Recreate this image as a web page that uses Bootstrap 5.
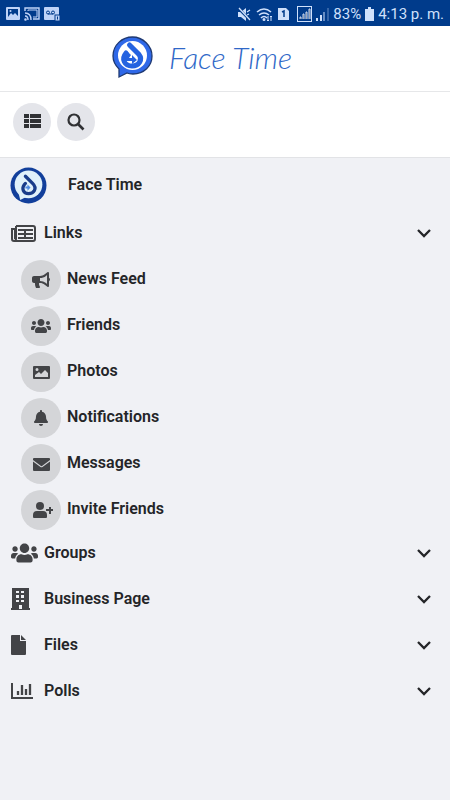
<!DOCTYPE html>
<html lang="en">
<head>
<meta charset="utf-8">
<meta name="viewport" content="width=device-width, initial-scale=1">
<title>Face Time</title>
<link href="https://cdn.jsdelivr.net/npm/bootstrap@5.3.0/dist/css/bootstrap.min.css" rel="stylesheet">
<style>
  body { font-family: Roboto, "Liberation Sans", sans-serif; font-size: 16px; line-height: 20px; background: #f0f1f5; color: #242528; min-height: 100vh; }
  svg { display: block; flex: none; }
  .status-bar { background: #003b8b; color: #cfe0fb; height: 26px; padding: 2px 6px 0; }
  .status-text { font-size: 15px; }
  .brand-bar { height: 66px; border-bottom: 1px solid #e6e7e9; padding: 0 46px 4px 0; }
  .brand-word { font-family: Lato, "Liberation Sans", sans-serif; font-style: italic; font-weight: 300; font-size: 30px; line-height: 32px; color: #2f68c8; }
  .tool-bar { height: 66px; padding: 0 13px 6px; gap: 6px; border-bottom: 1px solid #e2e3e6; }
  .round-btn { width: 38px; height: 38px; background: #e4e5ea; color: #303134; border: 0; }
  .side-link { color: #242528; font-weight: 600; text-decoration: none; }
  .profile { height: 52px; padding: 2px 10px 0; gap: 21px; }
  .group-row { width: 100%; height: 46px; padding: 0 16px 0 11px; border: 0; background: none; text-align: left; }
  .group-icon { width: 33px; color: #434447; }
  .sub-list { padding: 4px 21px 0; gap: 6px; }
  .sub-link { gap: 6px; }
  .sub-icon { width: 40px; height: 40px; background: #d4d5d8; color: #434447; }
  .sub-text { padding-bottom: 2px; }
</style>
<script defer src="https://cdn.jsdelivr.net/npm/bootstrap@5.3.0/dist/js/bootstrap.bundle.min.js"></script>
</head>
<body>
<svg width="0" height="0" class="position-absolute" aria-hidden="true">
  <symbol id="users" viewBox="0 0 640 512"><path fill="currentColor" d="M96 224c35.300 0 64-28.700 64-64s-28.700-64-64-64-64 28.700-64 64 28.700 64 64 64zm448 0c35.300 0 64-28.700 64-64s-28.700-64-64-64-64 28.700-64 64 28.700 64 64 64zm32 32h-64c-17.600 0-33.500 7.100-45.100 18.600 40.300 22.100 68.900 62 75.100 109.400h66c17.700 0 32-14.300 32-32v-32c0-35.300-28.700-64-64-64zm-256 0c61.900 0 112-50.100 112-112S381.900 32 320 32 208 82.100 208 144s50.100 112 112 112zm76.800 32h-8.300c-20.800 10-43.900 16-68.500 16s-47.600-6-68.500-16h-8.300C179.600 288 128 339.600 128 403.200V432c0 26.500 21.500 48 48 48h288c26.500 0 48-21.500 48-48v-28.800c0-63.600-51.600-115.200-115.200-115.200zm-223.700-13.400C161.500 263.100 145.600 256 128 256H64c-35.300 0-64 28.700-64 64v32c0 17.700 14.300 32 32 32h65.900c6.300-47.400 34.900-87.300 75.200-109.400z"/></symbol>
  <symbol id="chevron" viewBox="0 0 20 15"><path d="M4 4l6 6 6-6" fill="none" stroke="currentColor" stroke-width="2.300"/></symbol>
</svg>

<div class="status-bar d-flex align-items-center">
  <div class="d-flex align-items-center gap-1">
    <svg width="14" height="14" viewBox="0 0 14 14"><rect width="14" height="13" rx="1" fill="#bfd3f7"/><path d="M2 10V2h10v7L9 6 7 8 5 6z" fill="#003b8b"/><circle cx="4.500" cy="4" r="1" fill="#bfd3f7"/></svg>
    <svg width="16" height="14" viewBox="0 0 16 14" fill="none" stroke="#bfd3f7" stroke-width="1.400"><path d="M1 4V1h14v11H9"/><path d="M4 4V3h9v7H9" stroke-width="1"/><path d="M1 6q6 0 6 7M1 9q3 0 3 4"/><circle cx="1.500" cy="12.500" r=".6"/></svg>
    <svg width="18" height="15" viewBox="0 0 18 15"><rect width="15" height="13" rx="1" fill="#bfd3f7"/><g fill="none" stroke="#003b8b"><circle cx="4" cy="5.500" r="1.500"/><circle cx="9" cy="5.500" r="1.500"/><path d="M4 7h5"/></g><rect x="11" y="8" width="5" height="6" fill="#bfd3f7" stroke="#003b8b"/><path d="M13.500 9.500v3" stroke="#003b8b"/></svg>
  </div>
  <div class="d-flex align-items-center ms-auto gap-1">
    <svg width="15" height="15" viewBox="0 0 15 15"><path d="M1 5h3l5-4v13L4 10H1z" fill="#cfe0fb"/><path d="M1 1l12 12" stroke="#003b8b" stroke-width="2.500"/><path d="M2 1l11 12M10 5l3-2M10 8l2-1" stroke="#cfe0fb" stroke-width="1.300"/></svg>
    <svg width="18" height="15" viewBox="0 0 18 15" fill="none" stroke="#cfe0fb" stroke-width="1.600"><path d="M1 5q7-6 14 0M3 8q5-4 10 0M5 11q3-3 6 0"/><circle cx="8" cy="12.500" r=".7"/><path d="M12 9v5m-1-1l1 1 1-1M15 14V9m-1 1l1-1 1 1" stroke-width="1"/></svg>
    <svg width="11" height="14" viewBox="0 0 11 14"><path d="M0 1h8l3 3v9H0z" fill="#cfe0fb"/><path d="M4 5l2-1v6" fill="none" stroke="#003b8b" stroke-width="1.500"/></svg>
    <svg class="ms-1" width="15" height="16" viewBox="0 0 15 16"><rect x=".5" y=".5" width="14" height="15" fill="none" stroke="#cfe0fb"/><path d="M3 13v-2h1v2m2 0V8h1v5m2 0V6h1v7m2 0V3h1v10" stroke="#cfe0fb"/></svg>
    <svg width="13" height="14" viewBox="0 0 13 14" fill="none" stroke="#cfe0fb" stroke-width="2"><path d="M1 14v-3M5 14V8"/><path d="M8 14V5" stroke-width="1"/><path d="M12 14V1" stroke-width="1" opacity=".5"/></svg>
    <span class="status-text">83%</span>
    <svg width="9" height="14" viewBox="0 0 9 14"><path d="M3 0h3v2h3v12H0V2h3z" fill="#cfe0fb"/></svg>
    <span class="status-text">4:13 p. m.</span>
  </div>
</div>

<header class="bg-white">
  <div class="brand-bar d-flex align-items-center justify-content-center">
    <a href="#" class="d-flex align-items-center gap-3 text-decoration-none" aria-label="Face Time">
      <svg width="41" height="44" viewBox="0 0 41 44"><path d="M20.500 2C10 2 1 10 1 21c0 6 3 10 6 13v8l8-4c2 1 4 1 6 1 11 0 19-8 19-18S31 2 20.500 2z" fill="#2f68e8" stroke="#1f3972" stroke-width="1.300"/><circle cx="20.500" cy="20.500" r="14.500" fill="#fff"/><path d="M17.500 10l9.500 9.500c4 5 0 11.500-7 11.500-7.500 0-11-7-6-13" fill="none" stroke="#2563e0" stroke-width="5" stroke-linecap="round"/><path d="M12 21l4-4 3 3-2 3 3 0v-3l5 5-5 4v-3h-6z" fill="#2563e0"/></svg>
      <span class="brand-word">Face Time</span>
    </a>
  </div>
  <div class="tool-bar d-flex align-items-center">
    <button type="button" class="round-btn rounded-circle d-flex align-items-center justify-content-center p-0" aria-label="Menu">
      <svg width="17" height="15" viewBox="0 0 17 15" fill="currentColor"><path d="M0 0h5v4H0zm6 0h11v4H6zM0 5h5v4H0zm6 0h11v4H6zM0 10h5v4H0zm6 0h11v4H6z"/></svg>
    </button>
    <button type="button" class="round-btn rounded-circle d-flex align-items-center justify-content-center p-0" aria-label="Search">
      <svg width="18" height="18" viewBox="0 0 18 18" fill="none" stroke="currentColor"><circle cx="7" cy="7" r="5.500" stroke-width="2.200"/><path d="M11 11l5.500 5.500" stroke-width="2.600"/></svg>
    </button>
  </div>
</header>

<nav aria-label="Main menu">
  <a href="#" class="side-link profile d-flex align-items-center">
    <svg width="37" height="37" viewBox="0 0 36 36"><circle cx="18" cy="18" r="17.500" fill="#123f9b"/><circle cx="18" cy="17" r="13.500" fill="#e0f1fa"/><path d="M8 24l2 8 6-3z" fill="#e0f1fa"/><path d="M15 9l7 7c5 5 1 10-4 10s-7-5-4-9l1-1" fill="none" stroke="#193d8a" stroke-width="3.200" stroke-linecap="round"/><path d="M15 19h2v-2l3 3-3 3v-2h-2" fill="#4f8be0"/></svg>
    <span>Face Time</span>
  </a>

  <button type="button" class="side-link group-row d-flex align-items-center" data-bs-toggle="collapse" data-bs-target="#links" aria-expanded="true">
    <span class="group-icon"><svg width="25" height="17" viewBox="0 0 25 17"><path d="M5 1h17q2 0 2 2v11q0 2-2 2H3q-2 0-2-2V4h3v10M5 1v13q0 2-2 2" fill="none" stroke="currentColor" stroke-width="2"/><path d="M7 5h15M7 9h6M15 9h7M7 13h6M15 13h7M14 5v9" stroke="currentColor" stroke-width="2"/></svg></span>
    <span>Links</span><svg class="ms-auto" width="20" height="15"><use href="#chevron"/></svg>
  </button>

  <div id="links" class="collapse show">
    <div class="sub-list d-flex flex-column">
      <a href="#" class="side-link sub-link d-flex align-items-center">
        <span class="sub-icon rounded-circle d-flex align-items-center justify-content-center"><svg width="18" height="16" viewBox="0 0 576 512"><path fill="currentColor" d="M576 240c0-23.630-12.950-44.040-32-55.120V32.010C544 23.260 537.020 0 512 0c-7.120 0-14.190 2.380-19.980 7.020l-85.030 68.030C364.280 109.190 310.660 128 256 128H64c-35.350 0-64 28.650-64 64v96c0 35.350 28.650 64 64 64h33.700c-1.390 10.480-2.180 21.140-2.180 32 0 39.770 9.260 77.350 25.560 110.940 5.190 10.690 16.520 17.060 28.400 17.060h74.280c26.050 0 41.690-29.840 25.900-50.560-16.400-21.520-26.150-48.360-26.150-77.440 0-11.110 1.620-21.790 4.410-32H256c54.660 0 108.280 18.810 150.980 52.950l85.030 68.030a32 32 0 0 0 19.980 7.020c24.920 0 32-22.780 32-32V295.130C563.050 284.040 576 263.630 576 240zm-96 141.420l-33.050-26.440C392.950 311.780 325.120 288 256 288v-96c69.120 0 136.950-23.780 190.950-66.980L480 98.580v282.840z"/></svg></span>
        <span class="sub-text">News Feed</span>
      </a>
      <a href="#" class="side-link sub-link d-flex align-items-center">
        <span class="sub-icon rounded-circle d-flex align-items-center justify-content-center"><svg width="20" height="16"><use href="#users"/></svg></span>
        <span class="sub-text">Friends</span>
      </a>
      <a href="#" class="side-link sub-link d-flex align-items-center">
        <span class="sub-icon rounded-circle d-flex align-items-center justify-content-center"><svg width="17" height="13" viewBox="0 0 17 13"><path fill="currentColor" fill-rule="evenodd" d="M1 0h15q1 0 1 1v11q0 1-1 1H1q-1 0-1-1V1q0-1 1-1zM2 11h13V7l-3-3-4 4-2-2-4 3zM4 2a1.500 1.500 0 1 0 0 3 1.500 1.500 0 0 0 0-3z"/></svg></span>
        <span class="sub-text">Photos</span>
      </a>
      <a href="#" class="side-link sub-link d-flex align-items-center">
        <span class="sub-icon rounded-circle d-flex align-items-center justify-content-center"><svg width="14" height="16" viewBox="0 0 448 512"><path fill="currentColor" d="M224 512c35.320 0 63.970-28.650 63.970-64H160.030c0 35.350 28.650 64 63.970 64zm215.390-149.710c-19.320-20.760-55.470-51.990-55.470-154.290 0-77.700-54.480-139.900-127.940-155.160V32c0-17.670-14.320-32-31.980-32s-31.980 14.330-31.980 32v20.840C118.560 68.100 64.080 130.300 64.080 208c0 102.300-36.150 133.530-55.470 154.290-6 6.450-8.660 14.160-8.610 21.710.11 16.400 12.980 32 32.100 32h383.800c19.120 0 32-15.600 32.100-32 .05-7.550-2.610-15.270-8.610-21.710z"/></svg></span>
        <span class="sub-text">Notifications</span>
      </a>
      <a href="#" class="side-link sub-link d-flex align-items-center">
        <span class="sub-icon rounded-circle d-flex align-items-center justify-content-center"><svg width="17" height="13" viewBox="0 0 17 13"><path fill="currentColor" d="M1 0h15q1 0 1 1v1L9 8Q8.500 8.300 8 8L0 2V1q0-1 1-1zM0 3.500L7.500 9q1 .7 2 0L17 3.500V12q0 1-1 1H1q-1 0-1-1z"/></svg></span>
        <span class="sub-text">Messages</span>
      </a>
      <a href="#" class="side-link sub-link d-flex align-items-center">
        <span class="sub-icon rounded-circle d-flex align-items-center justify-content-center ps-1"><svg width="20" height="16" viewBox="0 0 20 16" fill="currentColor"><circle cx="7" cy="4" r="4"/><path d="M4 9h6q4 0 4 4v2q0 1-1 1H1q-1 0-1-1v-2q0-4 4-4zM16 5h2v2h2v2h-2v3h-2V9h-3V7h3z"/></svg></span>
        <span class="sub-text">Invite Friends</span>
      </a>
    </div>
  </div>

  <button type="button" class="side-link group-row d-flex align-items-center">
    <span class="group-icon"><svg width="27" height="22"><use href="#users"/></svg></span>
    <span>Groups</span><svg class="ms-auto" width="20" height="15"><use href="#chevron"/></svg>
  </button>
  <button type="button" class="side-link group-row d-flex align-items-center">
    <span class="group-icon"><svg width="19" height="22" viewBox="0 0 19 22"><path fill="currentColor" fill-rule="evenodd" d="M1 0h17v20h1v2H0v-2h1zM5 3v2h3V3zm5 0v2h3V3zM5 7v3h3V7zm5 0v3h3V7zm-5 5v2h3v-2zm5 0v2h3v-2zm-2 5v4h3v-4z"/></svg></span>
    <span>Business Page</span><svg class="ms-auto" width="20" height="15"><use href="#chevron"/></svg>
  </button>
  <button type="button" class="side-link group-row d-flex align-items-center">
    <span class="group-icon"><svg width="15" height="20" viewBox="0 0 15 20" fill="currentColor"><path d="M1 0h8v6h6v13q0 1-1 1H1q-1 0-1-1V1q0-1 1-1zM10 0l5 5h-5z"/></svg></span>
    <span>Files</span><svg class="ms-auto" width="20" height="15"><use href="#chevron"/></svg>
  </button>
  <button type="button" class="side-link group-row d-flex align-items-center">
    <span class="group-icon"><svg width="22" height="17" viewBox="0 0 22 17" fill="none" stroke="currentColor"><path d="M1 0v15h21" stroke-width="2"/><path d="M7 12V8M11 12V2M15 12V6M19 12V1" stroke-width="2.300"/></svg></span>
    <span>Polls</span><svg class="ms-auto" width="20" height="15"><use href="#chevron"/></svg>
  </button>
</nav>
</body>
</html>
